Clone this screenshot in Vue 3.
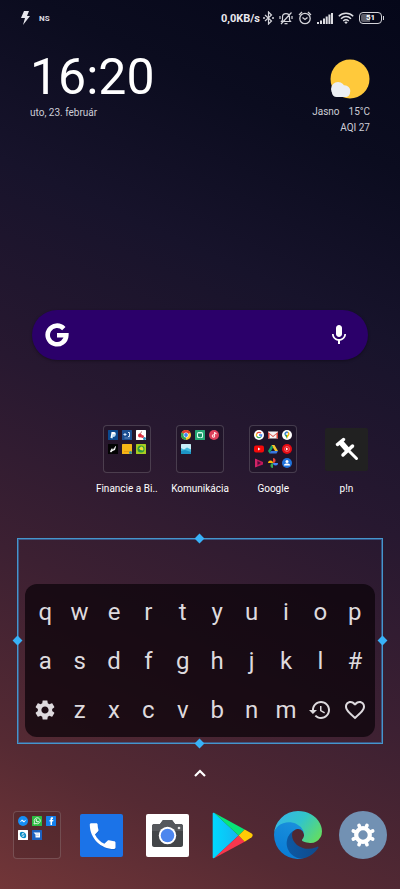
<script setup>
import { ref } from 'vue'

const query = ref('')

const paths = {
  settings: 'M19.14 12.94c.04-.3.06-.61.06-.94 0-.32-.02-.64-.07-.94l2.03-1.58c.18-.14.23-.41.12-.61l-1.92-3.32c-.12-.22-.37-.29-.59-.22l-2.39.96c-.5-.38-1.03-.7-1.62-.94l-.36-2.54c-.04-.24-.24-.41-.48-.41h-3.84c-.24 0-.43.17-.47.41l-.36 2.54c-.59.24-1.13.57-1.62.94l-2.39-.96c-.22-.08-.47 0-.59.22L2.74 8.87c-.12.21-.08.47.12.61l2.03 1.58c-.05.3-.09.63-.09.94s.02.64.07.94l-2.03 1.58c-.18.14-.23.41-.12.61l1.92 3.32c.12.22.37.29.59.22l2.39-.96c.5.38 1.03.7 1.62.94l.36 2.54c.05.24.24.41.48.41h3.84c.24 0 .44-.17.47-.41l.36-2.54c.59-.24 1.13-.56 1.62-.94l2.39.96c.22.08.47 0 .59-.22l1.92-3.32c.12-.22.07-.47-.12-.61l-2.01-1.58zM12 15.6c-1.98 0-3.6-1.62-3.6-3.6s1.62-3.6 3.6-3.6 3.6 1.62 3.6 3.6-1.62 3.6-3.6 3.6z',
  history: 'M13 3c-4.97 0-9 4.03-9 9H1l3.89 3.89.07.14L9 12H6c0-3.87 3.13-7 7-7s7 3.13 7 7-3.13 7-7 7c-1.93 0-3.68-.79-4.94-2.06l-1.42 1.42C8.27 19.99 10.51 21 13 21c4.97 0 9-4.03 9-9s-4.03-9-9-9zm-1 5v5l4.28 2.54.72-1.21-3.5-2.08V8H12z',
  heart: 'M16.5 3c-1.74 0-3.41.81-4.5 2.09C10.91 3.81 9.24 3 7.5 3 4.42 3 2 5.42 2 8.5c0 3.78 3.4 6.86 8.55 11.54L12 21.35l1.45-1.32C18.6 15.36 22 12.28 22 8.5 22 5.42 19.58 3 16.5 3zm-4.4 15.55l-.1.1-.1-.1C7.14 14.24 4 11.39 4 8.5 4 6.5 5.5 5 7.5 5c1.54 0 3.04.99 3.57 2.36h1.87C13.46 5.99 14.96 5 16.5 5c2 0 3.5 1.5 3.5 3.5 0 2.89-3.14 5.74-7.9 10.05z',
  phone: 'M6.62 10.79c1.44 2.83 3.76 5.14 6.59 6.59l2.2-2.2c.27-.27.67-.36 1.02-.24 1.12.37 2.33.57 3.57.57.55 0 1 .45 1 1V20c0 .55-.45 1-1 1-9.39 0-17-7.61-17-17 0-.55.45-1 1-1h3.5c.55 0 1 .45 1 1 0 1.25.2 2.45.57 3.57.11.35.03.74-.25 1.02l-2.2 2.2z',
}

const keys = [
  ...'qwertyuiop'.split(''),
  ...'asdfghjkl#'.split(''),
  'settings',
  ...'zxcvbnm'.split(''),
  'history',
  'heart',
]

// Miniature folder icons, drawn on a 20 x 20 grid
const mini = {
  paypal: '<rect width="20" height="20" rx="1" fill="#0b4a8f"/><path d="M7 4h5c3 0 4 2 3 5s-3 3-6 3l-1 4H5z" fill="#fff"/><path d="M9 8h6c1 4-1 6-5 6l-1 3H7z" fill="#b9dcf5"/>',
  tax: '<rect width="20" height="20" rx="1" fill="#1c4f91"/><path d="M3 9h6M6 6v6M12 5h3v8h-3" stroke="#dbe9fa" stroke-width="2" fill="none"/><path d="M5 16h11" stroke="#7ea3d2" stroke-width="1.5"/>',
  cherry: '<rect width="20" height="20" rx="1" fill="#fff"/><path d="M8 8c1-3 3-4 4-5" stroke="#9c2a31" stroke-width="1.5" fill="none"/><circle cx="8" cy="11" r="4" fill="#dc2d3d"/><circle cx="13" cy="13" r="3" fill="#e0394a"/><circle cx="17" cy="17" r="3" fill="#2988b8"/>',
  bird: '<rect width="20" height="20" rx="1" fill="#030303"/><path d="M4 15l3-6 4 1 4-6 1 1-2 7-5 2-3 3z" fill="#fff"/><path d="M7 12l6-3" stroke="#777"/>',
  yellow: '<rect width="20" height="20" rx="1" fill="#f5b616"/><path d="M4 14h10v2H4z" fill="#e79d12"/><circle cx="17" cy="17" r="3" fill="#3593a0"/>',
  lime: '<rect width="20" height="20" rx="1" fill="#a8cc20"/><circle cx="10" cy="10" r="7" fill="#2c9a40"/><path d="M10 5a5 5 0 0 1 4 8l-5-1-3-3z" fill="#f0dc35"/>',
  chrome: '<circle cx="10" cy="10" r="10" fill="#fdc92d"/><path d="M10 10L1.3 5a10 10 0 0 1 17.4 0z" fill="#e33b2e"/><path d="M10 10L1.3 5A10 10 0 0 0 10 20z" fill="#29a354"/><circle cx="10" cy="10" r="5" fill="#fff"/><circle cx="10" cy="10" r="3.8" fill="#3e82ed"/>',
  message: '<rect width="20" height="20" rx="1" fill="#26a875"/><rect x="4" y="4" width="12" height="12" rx="3" fill="#d8fff0"/><path d="M6 7h8v6l-3 2-5-2z" fill="#168d61"/>',
  music: '<circle cx="10" cy="10" r="10" fill="#dd405b"/><path d="M11 4v8" stroke="#ffe6e7" stroke-width="2"/><path d="M11 4l4 2v3l-4-2z" fill="#ffe6e7"/><circle cx="9" cy="12" r="3.5" fill="#ffe6e7"/><circle cx="9" cy="12" r="1.3" fill="#dd405b"/>',
  gallery: '<rect width="20" height="20" rx="1" fill="#c9effa"/><path d="M0 8l6 3 6-4 8 4v9H0z" fill="#42b9dc"/><path d="M0 14l8-2 12 4v4H0z" fill="#1c94c4"/>',
  google: '<circle cx="10" cy="10" r="10" fill="#fff"/><g fill="none" stroke-width="2.6"><path d="M5.5 7.3A5.2 5.2 0 0 1 14 6.4" stroke="#ea4335"/><path d="M5.5 7.3a5.5 5.5 0 0 0 0 5.4" stroke="#fbbc05"/><path d="M5.5 12.7a5.2 5.2 0 0 0 8.2 1" stroke="#34a853"/><path d="M10 10h5.3c0 1.5-.6 2.8-1.6 3.7" stroke="#4285f4"/></g>',
  gmail: '<path d="M0 3h20v14H0z" fill="#f4f4f4"/><path d="M0 4l10 8 10-8v13h-3V8l-7 6-7-6v9H0z" fill="#d93f35"/>',
  maps: '<circle cx="10" cy="10" r="10" fill="#fff"/><path d="M10 3a5 5 0 0 0-5 5c0 4 4 5 5 10z" fill="#2d9f50"/><path d="M10 3a5 5 0 0 1 5 5c0 4-4 5-5 10z" fill="#f6b90f"/><path d="M5 8a5 5 0 0 1 8-4l-6 7z" fill="#4183e5"/><circle cx="10" cy="8" r="2" fill="#fff"/>',
  youtube: '<rect y="3" width="20" height="14" rx="4" fill="#f50909"/><path d="M8 7l5 3-5 3z" fill="#fff"/>',
  drive: '<path d="M7 2h6l7 12h-6z" fill="#f4c22c"/><path d="M7 2L0 14l3 5 7-12z" fill="#15a469"/><path d="M3 19h14l3-5H6z" fill="#3877df"/>',
  ytmusic: '<circle cx="10" cy="10" r="10" fill="#e50a13"/><circle cx="10" cy="10" r="5" fill="none" stroke="#ffb3b3"/><path d="M8 7l5 3-5 3z" fill="#fff"/>',
  movies: '<path d="M2 1l16 7v5L2 19z" fill="#c2185b"/><path d="M7 6l7 4-7 4z" fill="#4f0d3c"/><path d="M4 3v14" stroke="#ff4d8c" stroke-width="2" stroke-dasharray="2"/>',
  photos: '<path d="M10 10V0a5 5 0 0 1 0 10z" fill="#eb4335"/><path d="M10 10h10a5 5 0 0 1-10 0z" fill="#4285f4"/><path d="M10 10v10a5 5 0 0 1 0-10z" fill="#34a853"/><path d="M10 10H0a5 5 0 0 1 10 0z" fill="#fbbc05"/>',
  contacts: '<circle cx="10" cy="10" r="10" fill="#1f73dc"/><circle cx="10" cy="7" r="3" fill="#fff"/><path d="M4 15v-1c0-4 12-4 12 0v1z" fill="#fff"/>',
  messenger: '<circle cx="10" cy="10" r="10" fill="#158df4"/><path d="M3 13l5-6 4 3 5-3-5 6-4-3z" fill="#fff"/>',
  whatsapp: '<rect width="20" height="20" rx="1" fill="#2dbd42"/><path d="M4 16l1-4a6 6 0 1 1 3 3z" fill="none" stroke="#fff" stroke-width="1.6"/><path d="M7 7c0 4 3 6 6 6l1-2-2-1-1 1-2-2 1-1-1-2z" fill="#fff"/>',
  facebook: '<rect width="20" height="20" rx="1" fill="#1580ed"/><path d="M9 18v-7H7V8h2V6c0-3 2-4 5-3v3c-2 0-2 0-2 2h3l-1 3h-2v7z" fill="#fff"/>',
  skype: '<rect width="20" height="20" rx="1" fill="#fff"/><circle cx="8" cy="8" r="4.5" fill="#0789c4"/><circle cx="12" cy="12" r="4.5" fill="#0789c4"/><circle cx="10" cy="10" r="5.5" fill="#0789c4"/><path d="M12.5 8c-1-2-5-1-5 .3 0 2 5 1.2 5 3.4 0 1.6-4 2-5 0" fill="none" stroke="#fff" stroke-width="1.5"/>',
  sms: '<rect width="20" height="20" rx="1" fill="#1d62c0"/><path d="M3 5h13v10H7V9z" fill="#fff"/><path d="M8 8h6M8 11h6" stroke="#8db3e6"/>',
}

const folders = [
  { name: 'Financie a Bi..', icons: ['paypal', 'tax', 'cherry', 'bird', 'yellow', 'lime'] },
  { name: 'Komunikácia', icons: ['chrome', 'message', 'music', 'gallery'] },
  { name: 'Google', icons: ['google', 'gmail', 'maps', 'youtube', 'drive', 'ytmusic', 'movies', 'photos', 'contacts'] },
]
const dockFolder = ['messenger', 'whatsapp', 'facebook', 'skype', 'sms']
const teeth = [0, 45, 90, 135, 180, 225, 270, 315]
</script>

<template>
  <main class="home">
    <header class="status">
      <div class="status-side">
        <svg class="bolt" viewBox="0 0 9 14"><path d="M3 0h5L6 5h3L2 14l2-7H0z" fill="#e8e8ee" /></svg>
        <span class="ns">NS</span>
      </div>
      <div class="status-side status-right">
        <span class="speed">0,0KB/s</span>
        <svg class="s-bt" viewBox="0 0 11 14" fill="none" stroke="#d4d4da" stroke-width="1.2">
          <path d="M2 4l6.500 6L5.500 13V1l3 3L2 10" />
          <path d="M0 7h2M9 7h2" stroke-width="1.600" />
        </svg>
        <svg class="s-bell" viewBox="0 0 14 14" fill="none" stroke="#d4d4da" stroke-width="1.200">
          <path d="M2.500 10.500h9L10.500 9V6c0-4.500-7-4.500-7 0v3zM5.500 12.600h3M12.500 1.500L2 13" /><path d="M1 5v3M13 5v3" />
        </svg>
        <svg class="s-alarm" viewBox="0 0 14 14" fill="none" stroke="#d4d4da" stroke-width="1.300">
          <circle cx="7" cy="7.500" r="5.200" /><path d="M4.500 6.500L7 8.500l2.500-2M1 4l3-3M13 4l-3-3" />
        </svg>
        <svg class="s-signal" viewBox="0 0 16 12" fill="#dddde2">
          <path d="M0 10h2v2H0zM3 8.500h2V12H3zM6 6.500h2V12H6zM8.700 4.500h2V12h-2zM11.400 2.500h2V12h-2zM14 1h2v11h-2z" />
        </svg>
        <svg class="s-wifi" viewBox="0 0 16 12" fill="none" stroke="#dddde2" stroke-width="1.500">
          <path d="M.8 4.300c4-4 10.400-4 14.400 0M3 6.700c3-2.800 7-2.800 10 0M5.200 9c1.800-1.500 3.800-1.500 5.600 0" />
          <path d="M6.300 10.200c1-.8 2.400-.8 3.400 0L8 12z" fill="#dddde2" stroke="none" />
        </svg>
        <span class="battery">51</span>
      </div>
    </header>

    <section class="glance">
      <div>
        <time class="clock">16:20</time>
        <div class="small">uto, 23. február</div>
      </div>
      <div class="weather">
        <svg class="sun" viewBox="0 0 40 40">
          <circle cx="20" cy="20" r="19.500" fill="#ffc93b" />
          <g fill="#eceff3"><circle cx="8" cy="30" r="7" /><circle cx="14.500" cy="32" r="5.800" /><rect x="2" y="29" width="18" height="9" rx="4.500" /></g>
        </svg>
        <div class="small conditions"><span>Jasno</span><span>15°C</span></div>
        <div class="small">AQI 27</div>
      </div>
    </section>

    <form class="search" @submit.prevent>
      <svg class="g" viewBox="0 0 24 24" fill="none" stroke="#fff" stroke-width="4.600">
        <path d="M18.800 5.600A9.300 9.300 0 1 0 21.300 12.300H12" />
      </svg>
      <input v-model="query" type="text" aria-label="Google" />
      <button type="button" aria-label="Mikrofón">
        <svg class="mic" viewBox="0 0 24 24" fill="#fff">
          <path d="M12 14c1.660 0 3-1.340 3-3V5c0-1.660-1.340-3-3-3S9 3.340 9 5v6c0 1.660 1.340 3 3 3z" />
          <path d="M17.300 11c0 3-2.540 5.100-5.300 5.100S6.700 14 6.700 11H5c0 3.410 2.720 6.230 6 6.720V21h2v-3.280c3.280-.48 6-3.300 6-6.720z" />
        </svg>
      </button>
    </form>

    <section class="apps">
      <button v-for="f in folders" :key="f.name" class="app" type="button">
        <span class="folder">
          <svg v-for="i in f.icons" :key="i" viewBox="0 0 20 20" v-html="mini[i]" />
        </span>
        <span class="label">{{ f.name }}</span>
      </button>
      <button class="app" type="button">
        <span class="slot">
          <svg class="tile pin" viewBox="0 0 43 43" fill="none" stroke="#fff" stroke-linecap="round">
            <path d="M12.500 16.500l6-5" stroke-width="3.500" />
            <path d="M16 14.500l7 8" stroke-width="5.500" stroke-linecap="butt" />
            <path d="M27.500 18l-9.500 9" stroke-width="3.500" />
            <path d="M23 22l8.500 8.500" stroke-width="3" />
          </svg>
        </span>
        <span class="label">p!n</span>
      </button>
    </section>

    <section class="widget">
      <i class="handle top" /><i class="handle right" /><i class="handle bottom" /><i class="handle left" />
      <div class="keyboard">
        <button v-for="k in keys" :key="k" class="key" type="button" :aria-label="k">
          <svg v-if="k.length > 1" class="key-icon" viewBox="0 0 24 24"><path :d="paths[k]" /></svg>
          <template v-else>{{ k }}</template>
        </button>
      </div>
    </section>

    <button class="drawer" type="button" aria-label="Aplikácie">
      <svg viewBox="0 0 12 8" fill="none" stroke="#fff" stroke-width="2.200"><path d="M1 7l5-5 5 5" /></svg>
    </button>

    <nav class="dock">
      <button type="button" aria-label="Sociálne siete">
        <span class="folder">
          <svg v-for="i in dockFolder" :key="i" viewBox="0 0 20 20" v-html="mini[i]" />
        </span>
      </button>
      <button type="button" aria-label="Telefón">
        <svg class="tile phone" viewBox="0 0 43 43">
          <g transform="translate(5.500 5) scale(1.430)"><path :d="paths.phone" fill="#0d4fae" opacity=".4" transform="translate(.3 .6)" /><path :d="paths.phone" fill="#fff" /></g>
        </svg>
      </button>
      <button type="button" aria-label="Fotoaparát">
        <svg class="tile camera" viewBox="0 0 43 43">
          <path d="M8 10h6l3-4h9l3 4h6c1 0 2 1 2 2v19c0 1-1 2-2 2H8c-1 0-2-1-2-2V12c0-1 1-2 2-2z" fill="#424548" />
          <path d="M8 10h6l3-4h9l3 4h6c1 0 2 1 2 2v5H6v-5c0-1 1-2 2-2z" fill="#55585c" />
          <circle cx="21.500" cy="21.500" r="8.700" fill="#fff" /><circle cx="21.500" cy="21.500" r="6.800" fill="#4c86ee" />
          <circle cx="33" cy="14" r="1.300" fill="#e4e4e4" />
        </svg>
      </button>
      <button type="button" aria-label="Obchod Play">
        <svg class="play" viewBox="40 34 123 140">
          <defs><linearGradient id="playBlue" x1="1" x2="0"><stop stop-color="#16b5ef" /><stop offset="1" stop-color="#00d9ff" /></linearGradient></defs>
          <path d="M42 39c0-3 3-4 6-2l72 67-72 67c-3 2-6 1-6-2z" fill="url(#playBlue)" />
          <path d="M46 36l92 50-18 18z" fill="#08e578" />
          <path d="M46 172l92-49-18-19z" fill="#f7364d" />
          <path d="M138 86l21 12c4 3 4 8 0 11l-21 14-18-19z" fill="#ffcb05" />
        </svg>
      </button>
      <button type="button" aria-label="Edge">
        <svg class="round" viewBox="0 0 256 256">
          <defs>
            <linearGradient id="edgeDark" x1="0" x2="1"><stop stop-color="#0c59a4" /><stop offset="1" stop-color="#114a8b" /></linearGradient>
            <linearGradient id="edgeBlue" x1=".7" y1="0" x2=".3" y2="1"><stop stop-color="#1b91dc" /><stop offset="1" stop-color="#087bd5" /></linearGradient>
            <linearGradient id="edgeGreen" x1="0" y1=".2" x2="1" y2=".7"><stop stop-color="#35b5e9" /><stop offset=".5" stop-color="#32c5c9" /><stop offset="1" stop-color="#62dc65" /></linearGradient>
          </defs>
          <path d="M231 190.500c-3.400 1.800-6.900 3.400-10.500 4.700a101.800 101.800 0 0 1-35.900 6.500c-47.300 0-88.500-32.500-88.500-74.300a31.500 31.500 0 0 1 16.400-27.300c-42.800 1.800-53.800 46.400-53.800 72.500 0 74 68.100 81.400 82.800 81.400 7.900 0 19.800-2.300 27-4.600l1.300-.4a128.300 128.300 0 0 0 66.600-52.800 4 4 0 0 0-5.400-5.700z" fill="url(#edgeDark)" />
          <path d="M105.700 241.400a79.200 79.200 0 0 1-22.700-21.300 80.700 80.700 0 0 1 29.500-120c3.200-1.500 8.500-4.100 15.600-4a32.400 32.400 0 0 1 25.700 13 31.900 31.900 0 0 1 6.300 18.700c0-.2 24.500-79.600-80-79.600-43.900 0-80 41.600-80 78.200a130.200 130.200 0 0 0 12.100 56 128 128 0 0 0 156.400 67 75.500 75.500 0 0 1-62.800-8z" fill="url(#edgeBlue)" />
          <path d="M152.300 148.900c-.9 1-3.400 2.500-3.400 5.600 0 2.600 1.700 5.200 4.800 7.300 14.300 10 41.400 8.600 41.500 8.600a59.600 59.600 0 0 0 30.300-8.300 61.400 61.400 0 0 0 30.400-52.900c.3-22.400-8-37.300-11.300-43.900C223.500 23.900 177.700 0 128 0A128 128 0 0 0 0 126.200c.5-36.500 36.800-66 80-66 3.500 0 23.500.3 42 10a72.600 72.600 0 0 1 30.900 29.300c6.100 10.600 7.200 24.100 7.200 29.500s-2.700 13.300-7.800 19.900z" fill="url(#edgeGreen)" />
        </svg>
      </button>
      <button type="button" aria-label="Nastavenia">
        <svg class="round" viewBox="0 0 48 48">
          <circle cx="24" cy="24" r="24" fill="#7291b3" />
          <circle cx="24" cy="24" r="6.800" fill="none" stroke="#fff" stroke-width="4.200" />
          <path v-for="a in teeth" :key="a" d="M24 16v-2.500" stroke="#fff" stroke-width="3.600" stroke-linecap="round" :transform="`rotate(${a + 22.5} 24 24)`" />
        </svg>
      </button>
    </nav>
  </main>
</template>

<style>
body {
  background: #0a0a1c;
}
</style>

<style scoped>
.home {
  box-sizing: border-box;
  min-height: 100vh;
  display: flex;
  flex-direction: column;
  overflow: hidden;
  padding-bottom: 24px;
  font-family: Roboto, "Noto Sans", sans-serif;
  color: #fff;
  background: linear-gradient(25deg, #723638 0%, #552a33 14%, #3c2032 32%, #271830 50%, #17132b 68%, #0b0c1f 84%, #050719 100%);
}
button {
  display: flex;
  align-items: center;
  justify-content: center;
  margin: 0;
  padding: 0;
  border: 0;
  background: none;
  color: inherit;
  font: inherit;
}
svg {
  display: block;
  flex: none;
}
.status {
  display: flex;
  justify-content: space-between;
  height: 36px;
  padding: 0 16px 0 21px;
}
.status-side {
  display: flex;
  align-items: center;
  gap: 9px;
}
.status-right {
  gap: 5px;
}
.bolt { width: 9px; height: 14px; }
.ns { font-size: 8px; font-weight: 700; color: #dcdce2; }
.speed { font-size: 11px; font-weight: 700; color: #e8e8ee; margin-right: -2px; }
.s-bt { width: 11px; height: 14px; }
.s-bell, .s-alarm { width: 14px; height: 14px; }
.s-signal, .s-wifi { width: 16px; height: 12px; }
.battery {
  position: relative;
  box-sizing: border-box;
  width: 23px;
  height: 12px;
  margin-right: 2px;
  border: 1px solid #d4d4da;
  border-radius: 4px;
  background: linear-gradient(90deg, #5d5d68 50%, transparent 50%) content-box;
  padding: 1px;
  font-size: 8px;
  line-height: 8px;
  font-weight: 700;
  text-align: center;
}
.battery::after {
  content: "";
  position: absolute;
  top: 3px;
  right: -3px;
  width: 1px;
  height: 4px;
  background: #d4d4da;
}
.glance {
  display: flex;
  justify-content: space-between;
  padding: 13px 30px 0;
}
.clock {
  display: block;
  font-size: 50px;
  line-height: 56px;
}
.small {
  font-size: 10px;
  line-height: 16px;
  color: #cdcdd6;
}
.weather {
  display: flex;
  flex-direction: column;
  align-items: flex-end;
  padding-top: 10px;
}
.sun { width: 40px; height: 40px; margin-bottom: 5px; }
.conditions { display: flex; gap: 9px; }
.search {
  display: flex;
  align-items: center;
  height: 50px;
  margin: 174px 32px 0;
  box-sizing: border-box;
  padding: 0 17px 0 13px;
  border-radius: 25px;
  background: #2b006a;
  box-shadow: 0 1px 3px rgba(0, 0, 0, .35);
}
.search input {
  flex: 1;
  min-width: 0;
  border: 0;
  outline: 0;
  padding: 0 12px;
  background: none;
  color: #fff;
  font: 16px Roboto, sans-serif;
}
.g { width: 24px; height: 24px; }
.mic { width: 24px; height: 24px; }
.apps {
  display: grid;
  grid-template-columns: repeat(5, 1fr);
  padding: 0 17px;
  margin-top: 65px;
}
.app {
  flex-direction: column;
  gap: 8px;
  min-width: 0;
}
.app:first-child { grid-column-start: 2; }
.folder {
  box-sizing: border-box;
  width: 48px;
  height: 48px;
  display: grid;
  grid-template-columns: repeat(3, 10px);
  grid-auto-rows: 10px;
  gap: 4px;
  padding: 4px;
  border: 1px solid rgba(255, 255, 255, .17);
  border-radius: 4px;
  background: rgba(0, 0, 0, .12);
}
.folder svg { width: 10px; height: 10px; }
.slot {
  display: flex;
  align-items: center;
  height: 48px;
}
.tile { width: 43px; height: 43px; border-radius: 2px; }
.pin { background: #212121; }
.phone { background: #1b73e8; }
.camera { background: #fff; }
.label { font-size: 10px; line-height: 16px; white-space: nowrap; }
.widget {
  position: relative;
  margin: 41px 17px 0;
  padding: 45px 7px 6px;
  border: 1px solid #4596cc;
  box-shadow: inset 0 0 0 1px rgba(60, 130, 200, .55);
}
.handle {
  position: absolute;
  width: 7px;
  height: 7px;
  margin: -4px;
  background: #38b2f8;
  transform: rotate(45deg);
}
.top { top: 0; left: 50%; }
.bottom { bottom: 0; left: 50%; }
.left { left: 0; top: 50%; }
.right { right: 0; top: 50%; }
.keyboard {
  display: grid;
  grid-template-columns: repeat(10, 1fr);
  grid-auto-rows: 49px;
  padding: 3px;
  border-radius: 12px;
  background: rgba(10, 3, 8, .72);
}
.key {
  font-size: 24px;
  line-height: 28px;
  color: #dedade;
}
.key-icon { width: 24px; height: 24px; fill: #dedade; }
.drawer { height: 20px; margin-top: 19px; }
.drawer svg { width: 12px; height: 8px; }
.dock {
  display: grid;
  grid-template-columns: repeat(6, 1fr);
  height: 48px;
  padding: 0 4px;
  margin-top: 28px;
}
.play { width: 41px; height: 47px; }
.round { width: 48px; height: 48px; }
</style>
